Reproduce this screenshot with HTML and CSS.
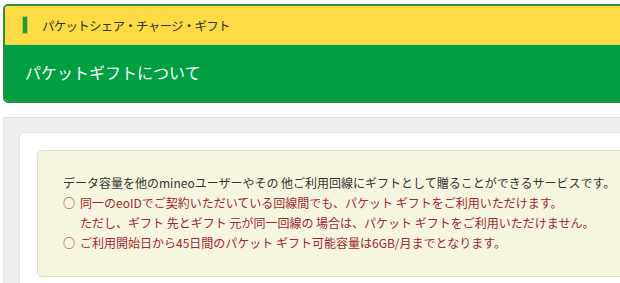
FILE: index.html
```html
<!DOCTYPE html>
<html lang="ja">
<head>
<meta charset="UTF-8">
<meta name="viewport" content="width=device-width, initial-scale=1.0">
<title>パケットギフトについて</title>
<link rel="stylesheet" href="styles.css">
</head>
<body>
<div class="page">
    <div class="title-box">
        <div class="category">
            <span class="category-mark"></span>
            <span class="category-text">パケットシェア・チャージ・ギフト</span>
        </div>
        <h1 class="page-title">パケットギフトについて</h1>
    </div>

    <div class="content-area">
        <div class="content-card">
            <div class="info-box">
                <p class="info-lead">データ容量を他のmineoユーザーやその 他ご利用回線にギフトとして贈ることができるサービスです。</p>
                <ul class="info-list">
                    <li><span class="mark">○</span><span>同一のeoIDでご契約いただいている回線間でも、パケット ギフトをご利用いただけます。<br>ただし、ギフト 先とギフト 元が同一回線の 場合は、パケット ギフトをご利用いただけません。</span></li>
                    <li><span class="mark">○</span><span>ご利用開始日から45日間のパケット ギフト可能容量は6GB/月までとなります。</span></li>
                </ul>
            </div>
        </div>
    </div>
</div>
</body>
</html>
```

FILE: styles.css
```css
html, body {
    height: 283px;
    overflow: hidden;
}
body {
    font-family: "Noto Sans CJK JP", "Noto Sans", sans-serif;
    background-color: #fff;
    margin: 0;
    padding: 0;
}
.page {
    width: 680px;
    padding: 4px 0 0 3px;
}
.title-box {
    border: 2px solid #2b8f3d;
    border-radius: 5px;
    overflow: hidden;
}
.category {
    display: flex;
    align-items: center;
    height: 38px;
    padding-left: 17px;
    background-color: #fddb45;
    border-bottom: 1px solid #c9dc6a;
}
.category-mark {
    width: 4px;
    height: 16px;
    background-color: #1e9a3a;
    border: 1px solid #b9c83c;
    margin-right: 14px;
}
.category-text {
    font-size: 12.5px;
    color: #333;
    letter-spacing: -0.75px;
}
.page-title {
    margin: 0;
    height: 56px;
    line-height: 54px;
    padding-left: 20px;
    background-color: #009f41;
    color: #fff;
    font-size: 16px;
    font-weight: normal;
}
.content-area {
    margin-top: 14px;
    padding: 14px 0 0 15px;
    background-color: #efefef;
    border-top: 1px solid #dcdcdc;
    border-left: 1px solid #e2e2e2;
}
.content-card {
    background-color: #fff;
    border-top-left-radius: 6px;
    border: 1px solid #e4e4e4;
    padding: 17px 0 20px 17px;
}
.info-box {
    background-color: #f6f6e0;
    border: 1px solid #dfdfcc;
    border-radius: 5px;
    padding: 22px 0 23px 25px;
    font-size: 12px;
    line-height: 20px;
}
.info-lead {
    margin: 0;
    color: #333;
}
.info-list {
    list-style: none;
    margin: 0;
    padding: 0;
    color: #a3272b;
}
.info-list li {
    display: flex;
}
.info-list .mark {
    flex: none;
    width: 17px;
}
```
